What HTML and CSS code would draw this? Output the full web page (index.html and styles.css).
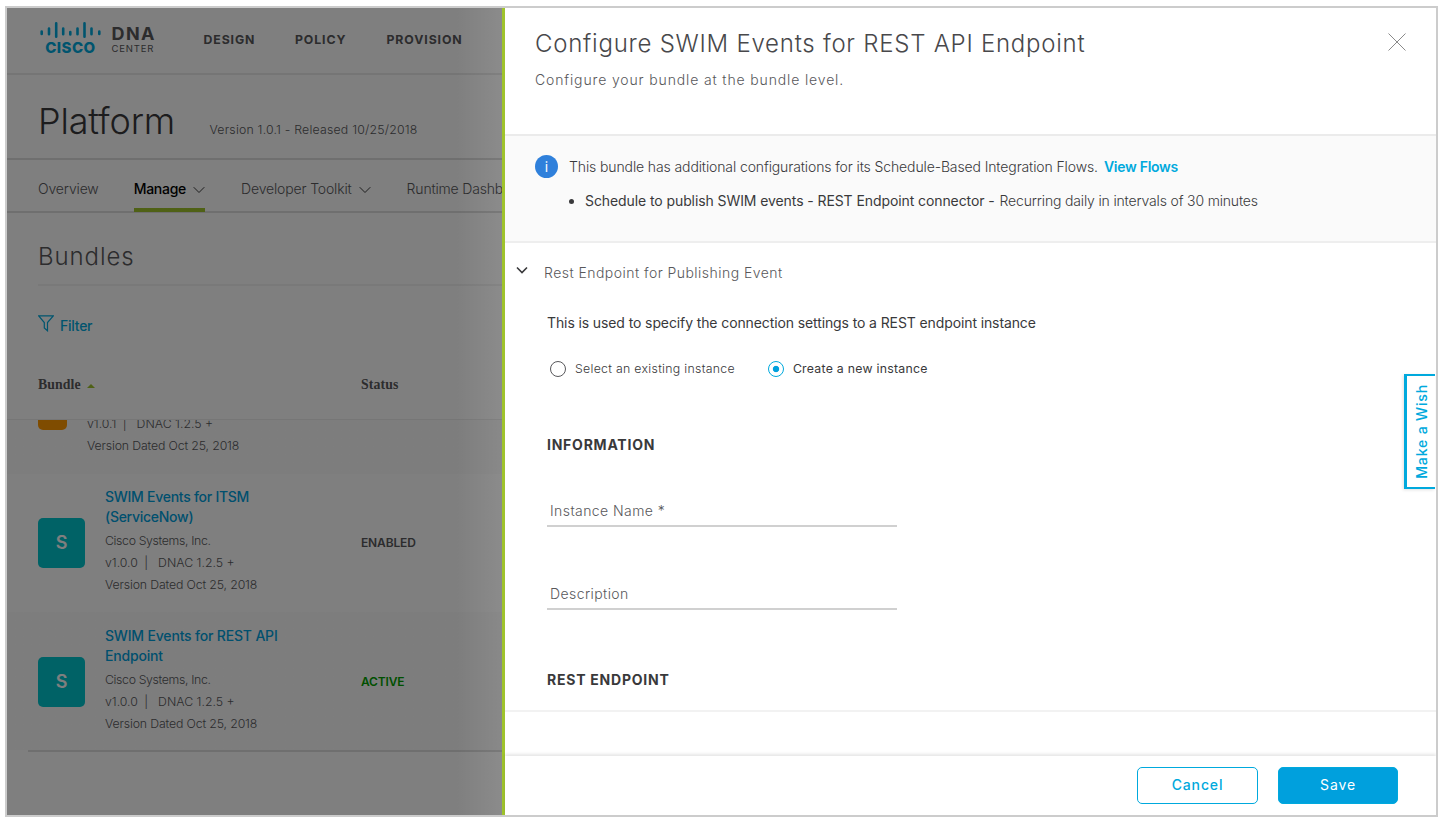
FILE: index.html
```html
<!DOCTYPE html>
<html lang="en">
<head>
<meta charset="utf-8">
<title>Cisco DNA Center</title>
<link rel="stylesheet" href="styles.css">
</head>
<body>
<div class="frame">
  <div class="page">
    <header class="topbar">
      <svg class="logo" width="62" height="36" viewBox="0 0 62 36">
        <path d="M2.700 11.500v2.500M10 8.500v5.800M17.200 3.300v13.400M24.200 8.500v5.800M31.300 12v2.500M38.500 8.500v5.800M45.500 3.300v13.400M52.500 8.500v5.800M60.300 11.500v2.500"/>
        <text x="6.200" y="33" textLength="50">CISCO</text>
      </svg>
      <div class="product">
        <div class="product-name">DNA</div>
        <div class="product-sub">CENTER</div>
      </div>
      <nav class="nav">
        <div>DESIGN</div>
        <div>POLICY</div>
        <div>PROVISION</div>
      </nav>
    </header>
    <div class="heading">
      <div class="heading-title">Platform</div>
      <div class="heading-version">Version 1.0.1 - Released 10/25/2018</div>
    </div>
    <div class="tabs">
      <div class="tab">Overview</div>
      <div class="tab tab-active">Manage<svg width="12" height="8" viewBox="0 0 12 8"><path d="M.7 1.200 6 6.500 11.300 1.200"/></svg></div>
      <div class="tab">Developer Toolkit<svg width="12" height="8" viewBox="0 0 12 8"><path d="M.7 1.200 6 6.500 11.300 1.200"/></svg></div>
      <div class="tab tab-last">Runtime Dashb</div>
    </div>
    <div class="section-title">Bundles</div>
    <div class="filter">
      <svg width="16" height="17" viewBox="0 0 16 17"><path d="M.7.800H15.300L9.500 7.500V15.800L6.300 13V7.500Z"/></svg>
      <span>Filter</span>
    </div>
    <div class="thead">
      <div class="col-bundle">Bundle<i class="sort"></i></div>
      <div>Status</div>
    </div>
    <div class="row row-cut">
      <div class="tile tile-orange"></div>
      <div class="meta">
        <p class="ver">v1.0.1 <span class="bar">|</span>&nbsp; DNAC 1.2.5 +</p>
        <p>Version Dated Oct 25, 2018</p>
      </div>
    </div>
    <div class="row">
      <div class="tile">S</div>
      <div class="meta">
        <p class="name">SWIM Events for ITSM</p>
        <p class="name">(ServiceNow)</p>
        <p class="vendor">Cisco Systems, Inc.</p>
        <p class="ver">v1.0.0 <span class="bar">|</span>&nbsp; DNAC 1.2.5 +</p>
        <p>Version Dated Oct 25, 2018</p>
      </div>
      <div class="status">ENABLED</div>
    </div>
    <div class="row row-alt">
      <div class="tile">S</div>
      <div class="meta">
        <p class="name name-rest">SWIM Events for REST API</p>
        <p class="name name-rest">Endpoint</p>
        <p class="vendor">Cisco Systems, Inc.</p>
        <p class="ver">v1.0.0 <span class="bar">|</span>&nbsp; DNAC 1.2.5 +</p>
        <p>Version Dated Oct 25, 2018</p>
      </div>
      <div class="status status-active">ACTIVE</div>
    </div>
    <div class="table-end"></div>
    <div class="overlay"></div>
  </div>
  <main class="panel">
    <header class="panel-head">
      <div>
        <h1>Configure SWIM Events for REST API Endpoint</h1>
        <p class="sub">Configure your bundle at the bundle level.</p>
      </div>
      <svg class="close" width="18" height="18" viewBox="0 0 18 18"><path d="M.5.500l17 17M17.500.500l-17 17"/></svg>
    </header>
    <section class="info">
      <div class="info-icon">i</div>
      <div class="info-body">
        <p>This bundle has additional configurations for its Schedule-Based Integration Flows.<a>View Flows</a></p>
        <ul><li><b>Schedule to publish SWIM events - REST Endpoint connector -</b><span>Recurring daily in intervals of 30 minutes</span></li></ul>
      </div>
    </section>
    <section class="body">
      <div class="accordion"><svg width="13" height="9" viewBox="0 0 13 9"><path d="M1 1.500 6 6.500 11 1.500"/></svg><span>Rest Endpoint for Publishing Event</span></div>
      <p class="desc">This is used to specify the connection settings to a REST endpoint instance</p>
      <div class="radios">
        <label class="radio"><i></i><span>Select an existing instance</span></label>
        <label class="radio radio-on"><i></i><span>Create a new instance</span></label>
      </div>
      <h2>INFORMATION</h2>
      <div class="field">Instance Name *</div>
      <div class="field">Description</div>
      <h2>REST ENDPOINT</h2>
    </section>
    <footer class="foot">
      <button class="btn">Cancel</button>
      <button class="btn btn-primary">Save</button>
    </footer>
  </main>
  <div class="wish"><span>Make a Wish</span></div>
</div>
</body>
</html>
```

FILE: styles.css
```css
* { box-sizing: border-box; margin: 0; padding: 0; }
body { background: #fff; font-family: Inter, "Liberation Sans", sans-serif; font-weight: 300; }
.frame { position: relative; display: flex; width: 1433px; height: 811px; margin: 6px 0 0 5px; border: 2px solid #ccc; overflow: hidden; }

/* Page behind the panel */
.page { position: relative; width: 495px; flex: none; overflow: hidden; background: #fff; white-space: nowrap; }
.overlay { position: absolute; inset: 0; background: linear-gradient(90deg, rgba(0,0,0,.5) 450px, rgba(0,0,0,.455) 495px); }
.topbar { display: flex; height: 67px; padding-left: 32px; border-bottom: 2px solid #ebebeb; }
.logo { flex: none; margin-top: 12px; overflow: visible; }
.logo path { stroke: #00a9dd; stroke-width: 2.600; stroke-linecap: round; fill: none; }
.logo text { font: 800 15px Inter, sans-serif; fill: #00a9dd; }
.product { width: 92px; margin: 16px 0 0 10.500px; color: #58585b; }
.product-name { font-size: 18px; font-weight: 700; line-height: 20px; letter-spacing: 1.400px; }
.product-sub { font-size: 9.500px; font-weight: 400; line-height: 9px; letter-spacing: .8px; }
.nav { display: flex; height: 62px; align-items: center; font-size: 12.300px; font-weight: 700; letter-spacing: .9px; color: #58585b; }
.nav div { width: 91.500px; }
.heading { display: flex; height: 85px; padding-left: 31px; border-bottom: 2px solid #dedede; }
.heading-title { width: 171.500px; font-size: 36px; line-height: 92px; letter-spacing: -.15px; color: #39393b; }
.heading-version { font-size: 12.300px; line-height: 109px; letter-spacing: .21px; color: #58585b; }
.tabs { display: flex; gap: 36px; height: 53px; padding-left: 31px; border-bottom: 2px solid #dedede; font-size: 14px; letter-spacing: -.15px; color: #58585b; }
.tab { display: flex; align-items: center; gap: 7px; height: 52px; padding-top: 4px; }
.tab svg { fill: none; stroke: #39393b; margin-top: 3px; }
.tab-active { margin-left: -1px; font-weight: 500; letter-spacing: -.27px; color: #000; border-bottom: 4px solid #9fc32c; padding-top: 8px; }
.tab-last { letter-spacing: -.17px; }
.section-title { height: 73px; margin-left: 31px; border-bottom: 2px solid #f2f2f2; font-size: 24px; line-height: 87px; letter-spacing: .9px; color: #58585b; }
.filter { display: flex; align-items: center; gap: 6px; height: 79px; padding-left: 31px; font-size: 14px; font-weight: 500; letter-spacing: -.25px; color: #00a9dd; }
.filter svg { fill: none; stroke: #00a9dd; stroke-width: 1.200; margin-top: -4px; }
.thead { display: flex; align-items: center; height: 55px; padding: 0 0 14px 31px; border-bottom: 1px solid #ececec; font: bold 13.800px "Liberation Serif", serif; letter-spacing: .1px; color: #58585b; }
.col-bundle { display: flex; align-items: center; width: 323px; }
.sort { margin-left: 6px; margin-top: 2px; border: 4px solid transparent; border-top: 0; border-bottom-color: #9fc32c; }
.row { display: flex; align-items: center; height: 138px; padding-left: 31px; }
.row-cut, .row-alt { background: #fbfbfb; }
.row-cut { align-items: flex-start; height: 54px; overflow: hidden; }
.row-alt { padding-top: 2px; }
.tile { width: 47px; height: 50px; flex: none; border-radius: 5px; background: #00c4cc; color: #fff; font-size: 18px; font-weight: 600; line-height: 49px; text-align: center; }
.tile-orange { width: 29px; margin-top: -40.500px; background: #ff9800; }
.meta { width: 256px; margin: -4px 0 0 20px; font-size: 12.300px; line-height: 22px; letter-spacing: -.14px; color: #58585b; }
.row-cut .meta { margin-top: -7px; }
.name { font-size: 14px; font-weight: 500; line-height: 20px; letter-spacing: -.27px; color: #00a0dd; }
.name-rest { letter-spacing: -.18px; }
.vendor { margin-top: 3px; letter-spacing: -.35px; }
.ver { letter-spacing: 0; }
.bar { margin: 0 3px; }
.status { margin-top: -2px; font-size: 12px; font-weight: 600; letter-spacing: -.15px; color: #58585b; }
.status-active { color: #00a000; }
.table-end { height: 2px; margin-left: 21px; background: #dedede; }

/* Configuration panel */
.panel { display: flex; flex-direction: column; width: 934px; height: 807px; border-left: 3px solid #9fc32c; background: #fff; color: #39393b; white-space: nowrap; }
.panel-head { display: flex; justify-content: space-between; height: 128px; flex: none; padding: 19px 30.500px 0 30px; border-bottom: 2px solid #ebebeb; }
h1 { font-size: 24px; font-weight: 300; line-height: 33px; letter-spacing: .75px; color: #48484b; }
.sub { margin-top: 10px; font-size: 14px; line-height: 20px; letter-spacing: .86px; color: #58585b; }
.close { margin-top: 6px; fill: none; stroke: #8a8a8a; }
.info { display: flex; height: 107px; flex: none; padding: 19px 30px 0; border-bottom: 2px solid #eee; background: #fafafa; font-size: 14px; line-height: 24px; letter-spacing: -.115px; }
.info-icon { width: 23px; height: 23px; border-radius: 50%; background: #2f80db; color: #fff; font-size: 14px; font-weight: 400; line-height: 23px; text-align: center; }
.info-body { margin-left: 11px; }
.info a { margin-left: 6px; font-weight: 600; letter-spacing: -.28px; color: #00a9dd; }
.info ul { margin-top: 10px; list-style: none; }
.info li { display: flex; align-items: center; }
.info li::before { content: ""; width: 5px; height: 5px; margin-right: 11px; border-radius: 50%; background: #39393b; }
.info li span { letter-spacing: -.165px; }
.info b { margin-right: 5px; font-weight: 400; letter-spacing: -.09px; }
.body { height: 469px; flex: none; padding-top: 17px; border-bottom: 2px solid #f2f2f2; font-size: 14px; }
.accordion { display: flex; align-items: center; gap: 15px; height: 24px; padding-left: 11px; letter-spacing: .46px; color: #58585b; }
.accordion svg { fill: none; stroke: #39393b; stroke-width: 1.600; margin-top: -4px; }
.desc, h2, .radios, .field { margin-left: 42px; }
.desc { margin-top: 27px; line-height: 24px; font-weight: 400; letter-spacing: -.11px; }
.radios { display: flex; gap: 33px; margin-top: 21px; padding-left: 3px; }
.radio { display: flex; align-items: center; height: 25px; font-size: 12.300px; letter-spacing: .3px; }
.radio i { width: 16px; height: 16px; margin-right: 9px; border: 1px solid #58585b; border-radius: 50%; }
.radio-on { font-weight: 400; letter-spacing: .26px; }
.radio-on i { border-color: #00a9dd; background: radial-gradient(#00a0dd 2.800px, transparent 3.600px); }
h2 { margin-top: 54px; font-size: 14px; font-weight: 700; line-height: 20px; letter-spacing: .76px; }
.field { width: 350px; height: 32px; margin-top: 40px; padding-left: 3px; border-bottom: 2px solid #d0d0d0; line-height: 32px; letter-spacing: .42px; color: #58585b; }
.field + .field { margin-top: 51px; }
.field + h2 { margin-top: 60px; }
.foot { display: flex; justify-content: flex-end; gap: 20px; margin-top: auto; height: 59px; padding: 11px 38px 0 0; box-shadow: 0 -2px 3px rgba(0,0,0,.1); }
.btn { width: 121px; height: 37px; padding-bottom: 2px; border: 1px solid #00a9dd; border-radius: 5px; background: #fff; color: #00a9dd; font: 500 14px Inter, sans-serif; letter-spacing: .85px; }
.btn-primary { width: 120px; background: #00a0dd; color: #fff; font-weight: 400; }
.wish { position: absolute; right: 1px; top: 366px; display: flex; align-items: center; justify-content: center; width: 31px; height: 115px; border: 2px solid #00a9dd; border-width: 2px 0 2px 3px; background: #fff; color: #00a9dd; font-size: 14px; font-weight: 500; letter-spacing: .85px; white-space: nowrap; box-shadow: -1px 1px 3px rgba(0,0,0,.12); }
.wish span { writing-mode: vertical-rl; transform: rotate(180deg); }
```
